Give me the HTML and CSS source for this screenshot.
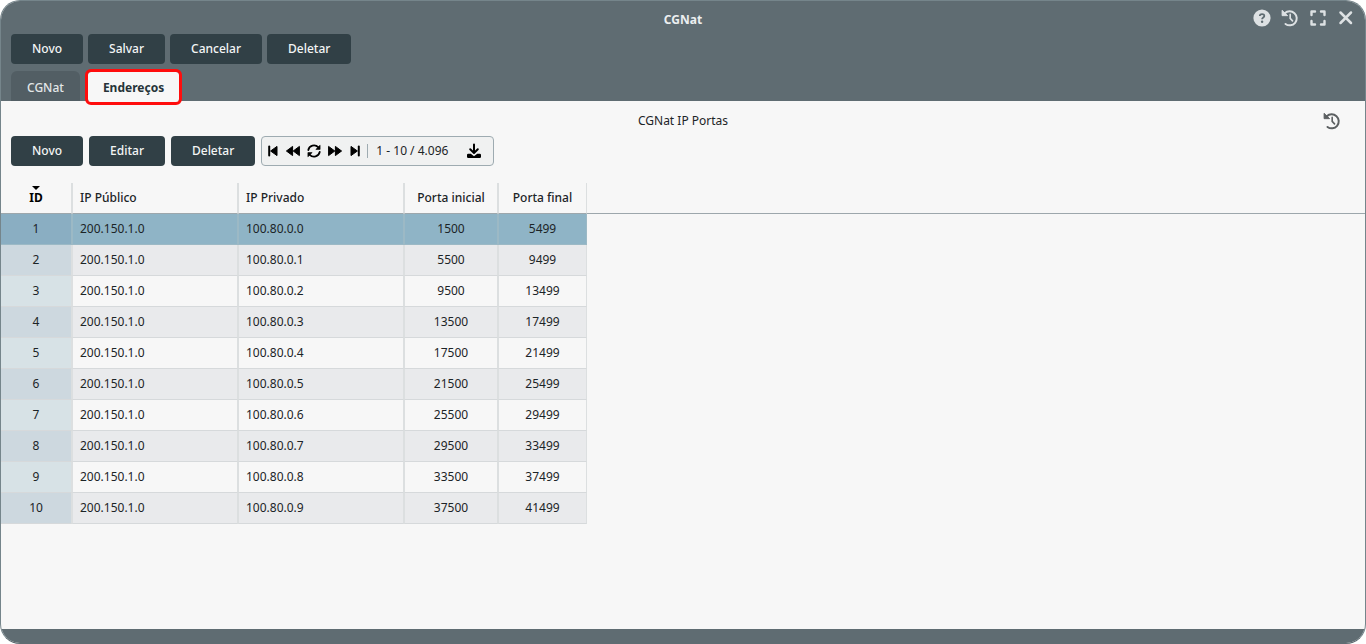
FILE: index.html
```html
<!DOCTYPE html>
<html lang="pt-BR">
<head>
<meta charset="utf-8">
<title>CGNat</title>
<link rel="stylesheet" href="styles.css">
</head>
<body>
<svg class="defs" aria-hidden="true">
  <symbol id="history" viewBox="0 0 20 20">
    <path d="M4.2 4.8A7.8 7.8 0 1 1 5 16.6" fill="none" stroke="currentColor" stroke-width="2.2" stroke-linecap="round"/>
    <path d="M1.2 1.4V7.4H7.4Z" fill="currentColor" stroke="currentColor" stroke-width="1" stroke-linejoin="round"/>
    <path d="M10.2 6V10.4L12.8 13.2" fill="none" stroke="currentColor" stroke-width="1.8" stroke-linecap="round"/>
  </symbol>
</svg>
<main class="window">
  <header class="window-header">
    <div class="titlebar">
      <h1 class="title">CGNat</h1>
      <div class="window-tools">
        <button class="icon-btn" aria-label="Ajuda"><svg viewBox="0 0 18 18"><circle cx="9" cy="9" r="8.6" fill="currentColor"/><path d="M6.8 7.1C6.8 4.3 11.4 4.5 11.3 7 11.2 8.6 9.1 8.4 9.1 10.3" fill="none" stroke="#5f6c72" stroke-width="1.8"/><circle cx="9.1" cy="12.8" r="1.2" fill="#5f6c72"/></svg></button>
        <button class="icon-btn" aria-label="Histórico"><svg><use href="#history"/></svg></button>
        <button class="icon-btn" aria-label="Tela cheia"><svg viewBox="0 0 18 18"><path d="M2.5 6V2.5H6M12 2.5H15.5V6M15.5 12V15.5H12M6 15.5H2.5V12" fill="none" stroke="currentColor" stroke-width="2.4" stroke-linecap="round" stroke-linejoin="round"/></svg></button>
        <button class="icon-btn" aria-label="Fechar"><svg viewBox="0 0 18 18"><path d="M3.5 3.5L14 14M14 3.5L3.5 14" fill="none" stroke="currentColor" stroke-width="2.5" stroke-linecap="round"/></svg></button>
      </div>
    </div>
    <div class="actions">
      <button class="btn">Novo</button>
      <button class="btn">Salvar</button>
      <button class="btn">Cancelar</button>
      <button class="btn">Deletar</button>
    </div>
    <nav class="tabs" role="tablist">
      <button class="tab" role="tab" aria-selected="false">CGNat</button>
      <button class="tab tab-active" role="tab" aria-selected="true">Endereços</button>
    </nav>
  </header>
  <section class="content">
    <div class="subheader">
      <h2 class="subtitle">CGNat IP Portas</h2>
      <button class="icon-btn history-btn" aria-label="Histórico"><svg><use href="#history"/></svg></button>
    </div>
    <div class="grid-actions">
      <button class="btn">Novo</button>
      <button class="btn">Editar</button>
      <button class="btn">Deletar</button>
      <div class="pager">
        <button class="page-btn" aria-label="Primeira"><svg viewBox="0 0 16 16"><path d="M4.2 3.4V12.6" stroke="#000" stroke-width="2" stroke-linecap="round"/><path d="M12 3.4V12.6L5.6 8Z" stroke="#000" stroke-linejoin="round"/></svg></button>
        <button class="page-btn" aria-label="Anterior"><svg viewBox="0 0 16 16"><path d="M7.6 3.4V12.6L1.4 8ZM14.4 3.4V12.6L8.2 8Z" stroke="#000" stroke-linejoin="round"/></svg></button>
        <button class="page-btn page-refresh" aria-label="Atualizar"><svg viewBox="0 0 16 16"><path d="M2.3 7A5.8 5.8 0 0 1 12.2 4.2M13.7 9A5.8 5.8 0 0 1 3.8 11.8" fill="none" stroke="#000" stroke-width="1.8" stroke-linecap="round"/><path d="M14.1 2.2V6.4H9.8ZM1.9 13.8V9.6H6.2Z" stroke="#000" stroke-width=".6" stroke-linejoin="round"/></svg></button>
        <button class="page-btn" aria-label="Próxima"><svg viewBox="0 0 16 16"><path d="M1.6 3.4V12.6L7.8 8ZM8.4 3.4V12.6L14.6 8Z" stroke="#000" stroke-linejoin="round"/></svg></button>
        <button class="page-btn" aria-label="Última"><svg viewBox="0 0 16 16"><path d="M11.8 3.4V12.6" stroke="#000" stroke-width="2" stroke-linecap="round"/><path d="M4 3.4V12.6L10.4 8Z" stroke="#000" stroke-linejoin="round"/></svg></button>
        <span class="page-info">1 - 10 / 4.096</span>
        <button class="page-btn" aria-label="Baixar"><svg viewBox="0 0 16 16"><path d="M8 1.5V9.5M4.2 6.3L8 10L11.8 6.3" fill="none" stroke="#000" stroke-width="2" stroke-linecap="round" stroke-linejoin="round"/><path d="M2.2 10.8H4.8L8 13.2L11.2 10.8H13.8Q15 10.8 15 12V13.8Q15 15 13.8 15H2.2Q1 15 1 13.8V12Q1 10.8 2.2 10.8Z"/></svg></button>
      </div>
    </div>
    <table class="grid">
      <colgroup><col class="col-id"><col class="col-ip"><col class="col-ip"><col class="col-start"><col class="col-end"><col></colgroup>
      <thead>
        <tr><th class="sorted" aria-sort="ascending">ID</th><th class="text">IP Público</th><th class="text">IP Privado</th><th>Porta inicial</th><th>Porta final</th><td class="filler"></td></tr>
      </thead>
      <tbody>
        <tr class="selected"><td>1</td><td class="text">200.150.1.0</td><td class="text">100.80.0.0</td><td>1500</td><td>5499</td></tr>
        <tr><td>2</td><td class="text">200.150.1.0</td><td class="text">100.80.0.1</td><td>5500</td><td>9499</td></tr>
        <tr><td>3</td><td class="text">200.150.1.0</td><td class="text">100.80.0.2</td><td>9500</td><td>13499</td></tr>
        <tr><td>4</td><td class="text">200.150.1.0</td><td class="text">100.80.0.3</td><td>13500</td><td>17499</td></tr>
        <tr><td>5</td><td class="text">200.150.1.0</td><td class="text">100.80.0.4</td><td>17500</td><td>21499</td></tr>
        <tr><td>6</td><td class="text">200.150.1.0</td><td class="text">100.80.0.5</td><td>21500</td><td>25499</td></tr>
        <tr><td>7</td><td class="text">200.150.1.0</td><td class="text">100.80.0.6</td><td>25500</td><td>29499</td></tr>
        <tr><td>8</td><td class="text">200.150.1.0</td><td class="text">100.80.0.7</td><td>29500</td><td>33499</td></tr>
        <tr><td>9</td><td class="text">200.150.1.0</td><td class="text">100.80.0.8</td><td>33500</td><td>37499</td></tr>
        <tr><td>10</td><td class="text">200.150.1.0</td><td class="text">100.80.0.9</td><td>37500</td><td>41499</td></tr>
      </tbody>
    </table>
  </section>
  <footer class="window-footer"></footer>
</main>
</body>
</html>
```
FILE: styles.css
```css
* { box-sizing: border-box; }
body {
  margin: 0;
  background: #fff;
  color: #1c2427;
  font: 12px/16px "Noto Sans", sans-serif;
}
button {
  margin: 0;
  padding: 0;
  border: 0;
  background: none;
  color: inherit;
  font: inherit;
  cursor: pointer;
}
svg { display: block; fill: #000; }
.defs { position: absolute; width: 0; height: 0; }
.window {
  display: flex;
  flex-direction: column;
  min-height: 100vh;
  border: 1px solid #75858b;
  border-bottom-color: #5f6c72;
  border-radius: 20px;
  overflow: hidden;
  background: #f7f7f7;
}
.window-header { background: #5f6c72; color: #eceff0; }
.titlebar {
  display: grid;
  grid-template-columns: 1fr auto 1fr;
  align-items: center;
  height: 33px;
  padding: 0 10px;
}
.title {
  grid-column: 2;
  margin: 4px 0 0;
  font-size: 12px;
  font-weight: 700;
}
.window-tools {
  display: flex;
  justify-content: flex-end;
  gap: 10px;
  color: #dde1e3;
}
.icon-btn svg { width: 18px; height: 18px; }
.actions { display: flex; gap: 5px; padding: 0 10px; }
.btn {
  height: 30px;
  padding: 0 21px;
  border-radius: 4px;
  background: #314046;
  color: #f3f5f5;
  font-weight: 500;
}
.tabs { display: flex; gap: 8px; padding: 7px 10px 0; }
.tab {
  height: 30px;
  padding: 4px 16px 0;
  border-radius: 6px 6px 0 0;
  background: #525e64;
  color: #e3e7e8;
  font-weight: 500;
}
.tab-active {
  margin: 1px 0 -1px;
  padding: 2px 15px 0;
  border-radius: 3px;
  outline: 3px solid #ff0d0d;
  background: #f7f7f7;
  color: #263338;
  font-weight: 700;
}
.content { flex: 1; }
.subheader {
  display: grid;
  grid-template-columns: 1fr auto 1fr;
  align-items: center;
  height: 35px;
  padding: 4px 24px 0;
}
.subtitle {
  grid-column: 2;
  margin: 0;
  font-size: 12px;
  font-weight: 400;
}
.history-btn { justify-self: end; color: #5c6062; }
.grid-actions { display: flex; gap: 6px; padding: 0 10px; }
.pager {
  display: flex;
  align-items: center;
  gap: 4px;
  height: 30px;
  padding: 0 11px 0 3px;
  border: 1px solid #9eabb1;
  border-radius: 4px;
  background: #f0f1f1;
}
.page-btn svg { width: 16px; height: 16px; }
.page-refresh { margin: 0 1px; }
.page-info {
  padding: 0 14px 0 8px;
  border-left: 1px solid #9eabb1;
  line-height: 14px;
}
.grid {
  width: 100%;
  margin-top: 17px;
  border-collapse: separate;
  border-spacing: 0;
  table-layout: fixed;
}
.col-id { width: 71px; }
.col-ip { width: 166px; }
.col-start { width: 94px; }
.col-end { width: 89px; }
.grid th, .grid td {
  height: 31px;
  padding: 0;
  border-bottom: 1px solid #d6d9db;
  border-right: 1px solid #dcdfe0;
  text-align: center;
}
.grid th { position: relative; border-bottom-color: #9da7ac; font-weight: 500; }
.grid th + th, .grid tbody td + td { border-left: 1px solid #dcdfe0; }
.grid .text { padding-left: 7px; text-align: left; }
.grid .filler { border-right: 0; border-bottom-color: #9da7ac; }
.grid .sorted { color: #000; font-weight: 700; }
.sorted::before {
  content: "";
  position: absolute;
  top: 3px;
  left: 50%;
  margin-left: -4px;
  border: 4px solid transparent;
  border-top-color: #000;
  border-bottom: 0;
}
.grid tbody tr:nth-child(even) td { background: #e9eaec; }
.grid tbody td:first-child { background: #d7e2e6; }
.grid tbody tr:nth-child(even) td:first-child { background: #cdd8df; }
.grid tbody .selected td {
  border-color: #9cb9c5;
  background: #8fb4c6;
}
.grid tbody .selected td:first-child { background: #8aaec2; }
.window-footer { height: 14px; background: #5f6c72; }
```
